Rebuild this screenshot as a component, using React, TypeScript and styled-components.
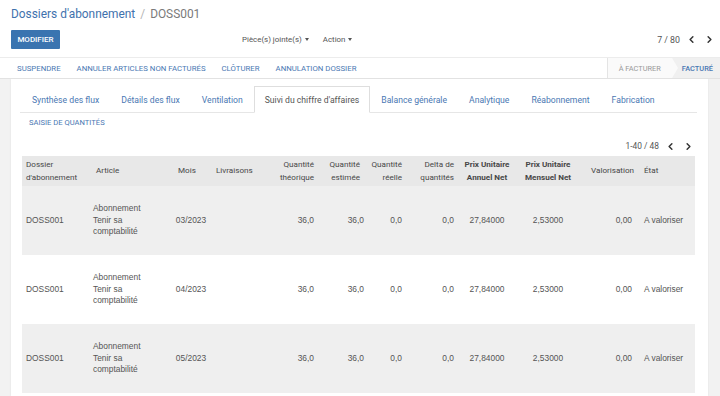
import React from 'react'
import styled, { createGlobalStyle } from 'styled-components'
import { ChevronLeft, ChevronRight } from 'lucide-react'

const GlobalStyle = createGlobalStyle`
  html, body { margin: 0; padding: 0; }
  body {
    font-family: Roboto, "Liberation Sans", sans-serif;
    background: #ffffff;
    overflow: hidden;
  }
  * { box-sizing: border-box; }
`

const blue = '#3f72ad'
const linkBlue = '#4a78b3'

type Row = { mois: string }

const rows: Row[] = [{ mois: '03/2023' }, { mois: '04/2023' }, { mois: '05/2023' }]

const tabs = [
  'Synthèse des flux',
  'Détails des flux',
  'Ventilation',
  "Suivi du chiffre d'affaires",
  'Balance générale',
  'Analytique',
  'Réabonnement',
  'Fabrication',
]

type Col = {
  label: React.ReactNode
  width: number
  align: 'left' | 'right' | 'center'
  strong?: boolean
  pad?: number
}

const cols: Col[] = [
  { label: <>Dossier<br />d'abonnement</>, width: 70, align: 'left' },
  { label: 'Article', width: 78, align: 'left' },
  { label: 'Mois', width: 42, align: 'left', pad: 8 },
  { label: 'Livraisons', width: 50, align: 'left' },
  { label: <>Quantité<br />théorique</>, width: 56, align: 'right' },
  { label: <>Quantité<br />estimée</>, width: 46, align: 'right' },
  { label: <>Quantité<br />réelle</>, width: 42, align: 'right' },
  { label: <>Delta de<br />quantités</>, width: 52, align: 'right' },
  { label: <>Prix Unitaire<br />Annuel Net</>, width: 58, align: 'center', strong: true },
  { label: <>Prix Unitaire<br />Mensuel Net</>, width: 64, align: 'center', strong: true },
  { label: 'Valorisation', width: 60, align: 'right', pad: 6 },
  { label: 'État', width: 55, align: 'left' },
]

const App = () => {
  return (
    <>
      <GlobalStyle />
      <StyledPage>
        <StyledControlPanel>
          <StyledBreadcrumb>
            <span className="link">Dossiers d'abonnement</span>
            <span className="sep">/</span>
            <span className="current">DOSS001</span>
          </StyledBreadcrumb>
          <StyledButtonRow>
            <PrimaryButton>MODIFIER</PrimaryButton>
            <StyledDropdowns>
              <DropToggle>Pièce(s) jointe(s) <Caret /></DropToggle>
              <DropToggle>Action <Caret /></DropToggle>
            </StyledDropdowns>
            <Pager>
              <span>7 / 80</span>
              <ChevronLeft size={11} strokeWidth={3.2} />
              <ChevronRight size={11} strokeWidth={3.2} />
            </Pager>
          </StyledButtonRow>
        </StyledControlPanel>

        <StyledStatusBar>
          <StyledActions>
            <LinkButton>SUSPENDRE</LinkButton>
            <LinkButton>ANNULER ARTICLES NON FACTURÉS</LinkButton>
            <LinkButton>CLÔTURER</LinkButton>
            <LinkButton>ANNULATION DOSSIER</LinkButton>
          </StyledActions>
          <StyledStates>
            <StateStep>À FACTURER</StateStep>
            <StateStep $current>FACTURÉ</StateStep>
          </StyledStates>
        </StyledStatusBar>

        <StyledContent>
          <StyledSheet>
            <StyledTabs>
              {tabs.map((t, i) => (
                <Tab key={t} $active={i === 3}>{t}</Tab>
              ))}
            </StyledTabs>
            <SmallLink>SAISIE DE QUANTITÉS</SmallLink>
            <StyledListPager>
              <span>1-40 / 48</span>
              <ChevronLeft size={11} strokeWidth={3.2} />
              <ChevronRight size={11} strokeWidth={3.2} />
            </StyledListPager>
            <StyledTable>
              <colgroup>
                {cols.map((c, i) => (
                  <col key={i} style={{ width: c.width }} />
                ))}
              </colgroup>
              <thead>
                <tr>
                  {cols.map((c, i) => (
                    <HeadCell key={i} $align={c.align} $strong={c.strong} $pad={c.pad}>
                      {c.label}
                    </HeadCell>
                  ))}
                </tr>
              </thead>
              <tbody>
                {rows.map((r, i) => (
                  <BodyRow key={r.mois} $odd={i % 2 === 0}>
                    <Cell $align="left">DOSS001</Cell>
                    <Cell $align="left" $pad={1}>Abonnement<br />Tenir sa<br />comptabilité</Cell>
                    <Cell $align="center">{r.mois}</Cell>
                    <Cell $align="left"></Cell>
                    <Cell $align="right">36,0</Cell>
                    <Cell $align="right" $pad={0}>36,0</Cell>
                    <Cell $align="right">0,0</Cell>
                    <Cell $align="right">0,0</Cell>
                    <Cell $align="center">27,84000</Cell>
                    <Cell $align="center">2,53000</Cell>
                    <Cell $align="right" $pad={8}>0,00</Cell>
                    <Cell $align="left">A valoriser</Cell>
                  </BodyRow>
                ))}
              </tbody>
            </StyledTable>
          </StyledSheet>
        </StyledContent>
      </StyledPage>
    </>
  )
}

export default App

const StyledPage = styled.div`
  width: 720px;
  height: 396px;
  display: flex;
  flex-direction: column;
  overflow: hidden;
`

const StyledControlPanel = styled.div`
  background: #fff;
  padding: 5px 5px 0 11px;
  height: 57px;
`

const StyledBreadcrumb = styled.div`
  font-size: 11.9px;
  height: 18px;
  display: flex;
  align-items: center;
  gap: 5px;
  .link { color: ${blue}; }
  .sep { color: #b5b5b5; }
  .current { color: #7a7a7a; }
`

const StyledButtonRow = styled.div`
  display: flex;
  align-items: center;
  margin-top: 7px;
`

const PrimaryButton = styled.button`
  background: #3a74b0;
  color: #fff;
  border: none;
  border-radius: 1px;
  height: 19px;
  width: 49px;
  padding: 0;
  font-family: Roboto, sans-serif;
  font-size: 8px;
  font-weight: 500;
`

const StyledDropdowns = styled.div`
  display: flex;
  gap: 14px;
  margin-left: 182px;
`

const DropToggle = styled.span`
  font-size: 7.9px;
  color: #555;
  display: inline-flex;
  align-items: center;
  gap: 3px;
`

const Caret = styled.i`
  display: inline-block;
  border-left: 2.5px solid transparent;
  border-right: 2.5px solid transparent;
  border-top: 3px solid #555;
`

const Pager = styled.div`
  margin-left: auto;
  display: flex;
  align-items: center;
  gap: 7px;
  font-size: 8.8px;
  color: #555;
  span { margin-right: -1px; }
  svg { color: #333; }
`

const StyledStatusBar = styled.div`
  height: 22px;
  border-top: 1px solid #ececec;
  border-bottom: 1px solid #e2e2e2;
  display: flex;
  align-items: stretch;
  background: #fff;
`

const StyledActions = styled.div`
  display: flex;
  align-items: center;
  padding-left: 17px;
  gap: 16px;
`

const LinkButton = styled.span`
  font-size: 7.8px;
  color: ${linkBlue};
`

const StyledStates = styled.div`
  margin-left: auto;
  display: flex;
  border-left: 1px solid #e4e4e4;
`

const StateStep = styled.span<{ $current?: boolean }>`
  position: relative;
  display: flex;
  align-items: center;
  font-size: 7.4px;
  color: ${p => (p.$current ? linkBlue : '#999')};
  font-weight: ${p => (p.$current ? 500 : 400)};
  background: ${p => (p.$current ? '#f0f0f0' : '#fafafa')};
  padding: ${p => (p.$current ? '0 7px 0 10px' : '0 11px 0 11px')};
  ${p =>
    !p.$current &&
    `
    &:after {
      content: '';
      position: absolute;
      right: -6px;
      top: 0;
      border-top: 10px solid transparent;
      border-bottom: 10px solid transparent;
      border-left: 6px solid #fafafa;
      z-index: 1;
    }
  `}
`

const StyledContent = styled.div`
  flex: 1;
  background: #f2f2f2;
  padding: 0 12px 0 11px;
  overflow: hidden;
`

const StyledSheet = styled.div`
  background: #fff;
  height: 100%;
  padding: 7px 11px 0 10px;
  box-shadow: 0 0 2px rgba(0, 0, 0, 0.08);
`

const StyledTabs = styled.div`
  display: flex;
  height: 27px;
  margin-left: -1px;
  border-bottom: 1px solid #e6e6e6;
`

const Tab = styled.div<{ $active?: boolean }>`
  display: flex;
  align-items: center;
  flex-shrink: 0;
  white-space: nowrap;
  padding: 0 10px;
  font-size: 8.65px;
  color: ${p => (p.$active ? '#555' : linkBlue)};
  background: #fff;
  border: 1px solid ${p => (p.$active ? '#dedede' : 'transparent')};
  border-bottom: ${p => (p.$active ? '1px solid #fff' : 'none')};
  margin-bottom: ${p => (p.$active ? '-1px' : '0')};
  &:first-child { padding-left: 11px; }
`

const SmallLink = styled.div`
  font-size: 7.6px;
  color: ${linkBlue};
  padding-left: 8px;
  margin-top: 4px;
  height: 12px;
  line-height: 12px;
`

const StyledListPager = styled.div`
  display: flex;
  justify-content: flex-end;
  align-items: center;
  gap: 7px;
  font-size: 8.4px;
  color: #555;
  height: 14px;
  margin-top: 10px;
  padding-right: 3px;
  span { margin-right: -1px; }
  svg { color: #333; }
`

const StyledTable = styled.table`
  margin-top: 3px;
  margin-left: 1px;
  width: 673px;
  border-collapse: collapse;
  table-layout: fixed;
`

const HeadCell = styled.th<{ $align: string; $strong?: boolean; $pad?: number }>`
  background: #e8e8e8;
  height: 30px;
  padding: 0 ${p => (p.$align === 'right' ? (p.$pad ?? 4) : 4)}px 0 ${p => (p.$align === 'left' ? (p.$pad ?? 4) : 4)}px;
  text-align: ${p => p.$align};
  font-family: Roboto, sans-serif;
  font-size: 8.1px;
  font-weight: ${p => (p.$strong ? 700 : 400)};
  color: #474747;
  line-height: 13.5px;
  vertical-align: middle;
  white-space: nowrap;
`

const BodyRow = styled.tr<{ $odd?: boolean }>`
  height: 69px;
  background: ${p => (p.$odd ? '#efefef' : '#fff')};
`

const Cell = styled.td<{ $align: string; $pad?: number }>`
  padding: 0 ${p => (p.$align === 'right' ? (p.$pad ?? 4) : 4)}px 0 ${p => (p.$align === 'left' ? (p.$pad ?? 4) : 4)}px;
  text-align: ${p => p.$align};
  font-family: "Liberation Sans", Arial, sans-serif;
  font-size: 8.4px;
  line-height: 11.5px;
  color: #555;
  vertical-align: middle;
  white-space: nowrap;
`
